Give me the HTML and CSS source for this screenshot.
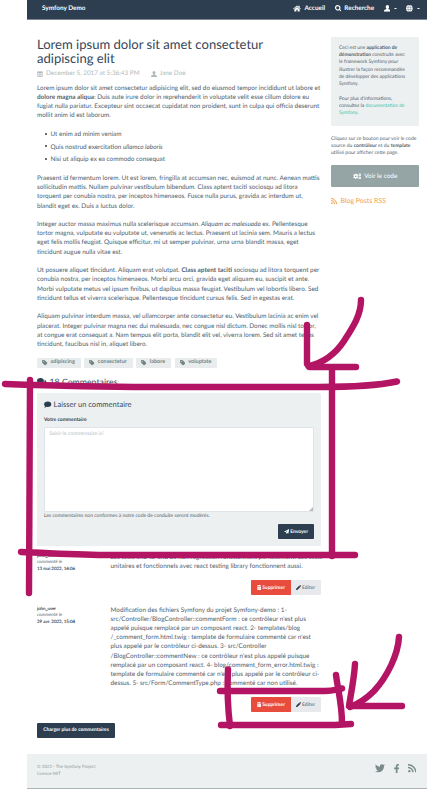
FILE: index.html
```html
<!DOCTYPE html>
<html lang="fr">
<head>
<meta charset="utf-8">
<title>Symfony Demo</title>
<link rel="stylesheet" href="styles.css">
</head>
<body>
<svg class="sprite" aria-hidden="true">
  <symbol id="home" viewBox="0 0 18 16"><path d="M9 1 0 8.500l1.200 1.300L9 3.400l7.800 6.400L18 8.500 15 6V1.500h-2.500v2.400zM9 4.800 3 9.700V15h4.500v-4h3v4H15V9.700z"/></symbol>
  <symbol id="search" viewBox="0 0 16 16"><path fill-rule="evenodd" d="M6.500 0a6.500 6.500 0 1 0 3.700 11.800L14.300 16 16 14.300l-4.200-4.100A6.500 6.500 0 0 0 6.500 0m0 2.700a3.800 3.800 0 1 1 0 7.600 3.800 3.800 0 0 1 0-7.600"/></symbol>
  <symbol id="user" viewBox="0 0 16 16"><path d="M8 0a4 4 0 0 1 4 4c0 2-1 4-2 4.700v1l4 1.300c1.500.5 2 1.500 2 5H0c0-3.500.5-4.500 2-5l4-1.300v-1C5 8 4 6 4 4a4 4 0 0 1 4-4"/></symbol>
  <symbol id="globe" viewBox="0 0 16 16"><circle cx="8" cy="8" r="8"/><path d="M0 5.500h16M0 10.500h16M8 0C3.500 4 3.500 12 8 16M8 0c4.500 4 4.500 12 0 16" fill="none" stroke="#2c3e50" stroke-width=".7"/></symbol>
  <symbol id="calendar" viewBox="0 0 16 16"><path fill-rule="evenodd" d="M1 2h2V0h3v2h4V0h3v2h2v14H1zm1.500 4v2h3V6zm4 0v2h3V6zm4 0v2h3V6zm-8 3v2h3V9zm4 0v2h3V9zm4 0v2h3V9zm-8 3v2h3v-2zm4 0v2h3v-2zm4 0v2h3v-2z"/></symbol>
  <symbol id="tag" viewBox="0 0 16 16"><path fill-rule="evenodd" d="M0 1.500Q0 0 1.500 0H7l8.500 8q1 1 0 2L10 15.500q-1 1-2 0L0 7.500zM3.500 2a1.500 1.500 0 1 0 0 3 1.500 1.500 0 0 0 0-3"/></symbol>
  <symbol id="comment" viewBox="0 0 18 16"><path d="M9 1c5 0 9 3 9 6.500S14 14 9 14q-2 0-3.500-.5Q3.500 15.500.5 15.500q2-2 2-3.500Q0 10 0 7.500C0 4 4 1 9 1"/></symbol>
  <symbol id="comments" viewBox="0 0 22 16"><path d="M8 0c4.500 0 8 2.500 8 6s-3.500 6-8 6q-1.500 0-3-.4Q3 13.500.5 13.500 2 12 2 10 0 8.500 0 6c0-3.500 3.500-6 8-6M17.500 4.500c3 .7 4.500 2.500 4.500 5q0 2-2 3.500 0 1.500 1.500 3-2.500 0-4.500-1.700-5 .7-8-1.300 8-.5 8.500-6.500z"/></symbol>
  <symbol id="plane" viewBox="0 0 16 16"><path d="M16 0 13.500 14 9 12.200 6.500 16v-5L13 3.500 4.500 10.300 0 8.500z"/></symbol>
  <symbol id="trash" viewBox="0 0 14 16"><path d="M0 1.500h4L5 0h4l1 1.500h4V4H0zM1 5h12v9.500Q13 16 11.500 16h-9Q1 16 1 14.500z"/><path d="M4.500 6.500v8M7 6.500v8M9.500 6.500v8" stroke="#e74c3c" stroke-width=".5"/></symbol>
  <symbol id="pencil" viewBox="0 0 16 16"><path d="m9.500 2.500 4 4L5 15l-5 1 1-5zM10.500 1.500l1-1q1-1 2 0l2 2q1 1 0 2l-1 1z"/></symbol>
  <symbol id="gear" viewBox="0 0 16 16"><path fill-rule="evenodd" d="M6.500 0h3l.5 2.200 1.500.8 2.200-.7 1.500 2.600L13.600 6.500v3l1.600 1.600-1.500 2.600-2.200-.7-1.500.8L9.500 16h-3L6 13.800 4.500 13l-2.200.7L.8 11.100l1.600-1.600v-3L.8 4.900l1.500-2.600 2.200.7L6 2.200zM8 5.500a2.500 2.500 0 1 0 0 5 2.500 2.500 0 0 0 0-5"/></symbol>
  <symbol id="gears" viewBox="0 0 22 16"><use href="#gear" x="0" y="1" width="14" height="14"/><use href="#gear" x="13" y="0" width="9" height="8"/><use href="#gear" x="13" y="8" width="9" height="8"/></symbol>
  <symbol id="rss" viewBox="0 0 16 16"><circle cx="2.500" cy="13.500" r="2.300"/><path d="M0 6.500A9.500 9.500 0 0 1 9.500 16M0 1.300A14.700 14.700 0 0 1 14.700 16" fill="none" stroke="currentColor" stroke-width="2.600"/></symbol>
  <symbol id="twitter" viewBox="0 0 512 420"><path d="M459 105c.3 4.500.3 9 .3 13.600 0 138.700-105.600 298.600-298.600 298.600-59.500 0-114.700-17.200-161.100-47 8.400 1 16.600 1.300 25.300 1.300 49 0 94.200-16.600 130.300-44.800-46.100-1-84.800-31.200-98.100-72.800 6.500 1 13 1.600 19.800 1.600 9.400 0 18.800-1.300 27.600-3.600-48-9.700-84.100-52-84.100-103v-1.300c14 7.800 30.200 12.700 47.400 13.300C39.500 142 20.900 110 20.900 74c0-19.500 5.200-37.400 14.300-53 51.700 63.700 129.300 105.300 216.400 109.800-1.600-7.800-2.600-15.900-2.600-24C249 49 295.800 2 353.900 2c30.200 0 57.500 12.700 76.700 33.100 23.700-4.500 46.500-13.300 66.600-25.300-7.800 24.400-24.400 44.800-46.100 57.800 21.100-2.300 41.600-8.100 60.400-16.200-14.300 20.800-32.200 39.300-52.600 54.300"/></symbol>
  <symbol id="facebook" viewBox="0 0 9 16"><path d="M9 0v2.700H7.200C6 2.700 5.800 3.300 5.800 4v2H9l-.4 2.900H5.800V16H2.900V8.900H0V6h2.900V3.700C2.900 1.300 4.400 0 6.600 0z"/></symbol>
</svg>

<header class="navbar">
  <a class="brand">Symfony Demo</a>
  <nav class="menu">
    <a class="item"><svg class="icon i-home"><use href="#home"/></svg>Accueil</a>
    <a class="item"><svg class="icon i-search"><use href="#search"/></svg>Recherche</a>
    <a class="item"><svg class="icon i-user"><use href="#user"/></svg><i class="caret"></i></a>
    <a class="item"><svg class="icon i-globe"><use href="#globe"/></svg><i class="caret"></i></a>
  </nav>
</header>

<div class="content">
  <main class="main">
    <h1 class="title">Lorem ipsum dolor sit amet consectetur<br>adipiscing elit</h1>
    <p class="meta"><svg class="icon i-meta"><use href="#calendar"/></svg><span class="date">December 5, 2017 at 5:36:43 PM</span><svg class="icon i-meta"><use href="#user"/></svg><span>Jane Doe</span></p>
    <div class="post">
      <p>Lorem ipsum dolor sit amet consectetur adipisicing elit, sed do eiusmod tempor incididunt ut labore et<br><strong>dolore magna aliqua</strong>: Duis aute irure dolor in reprehenderit in voluptate velit esse cillum dolore eu<br>fugiat nulla pariatur. Excepteur sint occaecat cupidatat non proident, sunt in culpa qui officia deserunt<br>mollit anim id est laborum.</p>
      <ul class="list">
        <li>Ut enim ad minim veniam</li>
        <li>Quis nostrud exercitation <em>ullamco laboris</em></li>
        <li>Nisi ut aliquip ex ea commodo consequat</li>
      </ul>
      <p>Praesent id fermentum lorem. Ut est lorem, fringilla at accumsan nec, euismod at nunc. Aenean mattis<br>sollicitudin mattis. Nullam pulvinar vestibulum bibendum. Class aptent taciti sociosqu ad litora<br>torquent per conubia nostra, per inceptos himenaeos. Fusce nulla purus, gravida ac interdum ut,<br>blandit eget ex. Duis a luctus dolor.</p>
      <p>Integer auctor massa maximus nulla scelerisque accumsan. <em>Aliquam ac malesuada</em> ex. Pellentesque<br>tortor magna, vulputate eu vulputate ut, venenatis ac lectus. Praesent ut lacinia sem. Mauris a lectus<br>eget felis mollis feugiat. Quisque efficitur, mi ut semper pulvinar, urna urna blandit massa, eget<br>tincidunt augue nulla vitae est.</p>
      <p>Ut posuere aliquet tincidunt. Aliquam erat volutpat. <strong>Class aptent taciti</strong> sociosqu ad litora torquent per<br>conubia nostra, per inceptos himenaeos. Morbi arcu orci, gravida eget aliquam eu, suscipit et ante.<br>Morbi vulputate metus vel ipsum finibus, ut dapibus massa feugiat. Vestibulum vel lobortis libero. Sed<br>tincidunt tellus et viverra scelerisque. Pellentesque tincidunt cursus felis. Sed in egestas erat.</p>
      <p>Aliquam pulvinar interdum massa, vel ullamcorper ante consectetur eu. Vestibulum lacinia ac enim vel<br>placerat. Integer pulvinar magna nec dui malesuada, nec congue nisl dictum. Donec mollis nisl tortor,<br>at congue erat consequat a. Nam tempus elit porta, blandit elit vel, viverra lorem. Sed sit amet tellus<br>tincidunt, faucibus nisl in, aliquet libero.</p>
    </div>
    <div class="tags">
      <a class="tag"><svg class="icon i-tag"><use href="#tag"/></svg>adipiscing</a>
      <a class="tag"><svg class="icon i-tag"><use href="#tag"/></svg>consectetur</a>
      <a class="tag"><svg class="icon i-tag"><use href="#tag"/></svg>labore</a>
      <a class="tag"><svg class="icon i-tag"><use href="#tag"/></svg>voluptate</a>
    </div>
    <h2 class="subtitle count"><svg class="icon i-comments"><use href="#comments"/></svg>18 Commentaires</h2>
    <form class="well">
      <h2 class="subtitle"><svg class="icon i-comment"><use href="#comment"/></svg>Laisser un commentaire</h2>
      <label class="label" for="c">Votre commentaire</label>
      <div class="field"><textarea class="area" id="c" placeholder="Saisir le commentaire ici"></textarea><svg class="grip" viewBox="0 0 5 5"><path d="M5 0v5H0z"/></svg></div>
      <p class="help">Les commentaires non conformes à notre code de conduite seront modérés.</p>
      <button class="btn send" type="button"><svg class="icon i-btn"><use href="#plane"/></svg>Envoyer</button>
    </form>
    <article class="comment first">
      <div class="author"><strong>john_user</strong><br>commenté le<br><strong>13 mai 2022, 14:06</strong></div>
      <div class="body">
        <p>Les tests end-to-end de non régression fonctionnent parfaitement. Les tests<br>unitaires et fonctionnels avec react testing library fonctionnent aussi.</p>
        <div class="actions"><button class="btn delete" type="button"><svg class="icon i-trash"><use href="#trash"/></svg>Supprimer</button><button class="btn edit" type="button"><svg class="icon i-btn"><use href="#pencil"/></svg>Editer</button></div>
      </div>
    </article>
    <article class="comment">
      <div class="author"><strong>john_user</strong><br>commenté le<br><strong>29 avr. 2022, 15:04</strong></div>
      <div class="body">
        <p>Modification des fichiers Symfony du projet Symfony-demo : 1-<br>src/Controller/BlogController::commentForm : ce contrôleur n'est plus<br>appelé puisque remplacé par un composant react. 2- templates/blog<br>/_comment_form.html.twig : template de formulaire commenté car n'est<br>plus appelé par le contrôleur ci-dessus. 3- src/Controller<br>/BlogController::commentNew : ce contrôleur n'est plus appelé puisque<br>remplacé par un composant react. 4- blog/comment_form_error.html.twig :<br>template de formulaire commenté car n'est plus appelé par le contrôleur ci-<br>dessus. 5- src/Form/CommentType.php : commenté car non utilisé.</p>
        <div class="actions"><button class="btn delete" type="button"><svg class="icon i-trash"><use href="#trash"/></svg>Supprimer</button><button class="btn edit" type="button"><svg class="icon i-btn"><use href="#pencil"/></svg>Editer</button></div>
      </div>
    </article>
    <button class="btn more" type="button">Charger plus de commentaires</button>
  </main>

  <aside class="side">
    <div class="about">
      <p>Ceci est une <strong>application de<br>démonstration</strong> construite avec<br>le framework Symfony pour<br>illustrer la façon recommandée<br>de développer des applications<br>Symfony.</p>
      <p>Pour plus d'informations,<br>consultez la <a class="link">documentation de<br>Symfony</a>.</p>
    </div>
    <p class="hint">Cliquez sur ce bouton pour voir le code<br>source du <strong>contrôleur</strong> et du <strong>template</strong><br>utilisé pour afficher cette page.</p>
    <button class="code" type="button"><svg class="icon i-gears"><use href="#gears"/></svg>Voir le code</button>
    <a class="feed"><svg class="icon i-rss"><use href="#rss"/></svg>Blog Posts RSS</a>
  </aside>
</div>

<footer class="footer">
  <p>© 2022 - The Symfony Project<br>Licence MIT</p>
  <div class="social"><svg class="icon i-tw"><use href="#twitter"/></svg><svg class="icon i-fb"><use href="#facebook"/></svg><svg class="icon i-feed"><use href="#rss"/></svg></div>
</footer>

<svg class="marks" viewBox="0 0 427 789" aria-hidden="true">
  <path d="M5 384C60 386 90 387 150 387H320C350 387 375 386 397 381.500"/>
  <path d="M30 380C30 430 29 500 29 593"/>
  <path d="M21 552C50 553 80 555 110 555H355"/>
  <path d="M332 368V556"/>
  <path d="M361 300C361 315 353 327 344 341C334 356 322 363 309 366"/>
  <path d="M307 325V364L309 367H356"/>
  <path d="M228 669.500C227 690 228 710 230 726"/>
  <path d="M220 691H325C333 691 338 689 342 688.500"/>
  <path d="M336 675C338 690 342 705 342 723"/>
  <path d="M221 725H335L351 724"/>
  <path d="M399 637C398 655 387 677 374 691C366 699 358 704 350 707"/>
  <path d="M355 664C354 680 351 693 349 706H402"/>
</svg>
</body>
</html>
```
FILE: styles.css
```css
* { box-sizing: border-box; }
body { margin: 0; width: 427px; height: 789px; overflow: hidden; position: relative; background: #fff; color: #505e6c; font-family: Lato, "Liberation Sans", sans-serif; font-size: 6.390px; line-height: 9.150px; white-space: nowrap; text-rendering: geometricPrecision; }
p, h1, h2, ul { margin: 0; padding: 0; font-weight: 400; }
button { font-family: inherit; border: 0; margin: 0; padding: 0; white-space: nowrap; text-rendering: inherit; }
.sprite { position: absolute; width: 0; height: 0; }
.icon { fill: currentColor; flex: none; display: block; }

.navbar { margin-left: 27px; height: 19.500px; padding: 0 7.500px 1px 15px; display: flex; align-items: center; justify-content: space-between; background: #2c3e50; border-bottom: 1px solid #7c8792; color: #fff; font-size: 6.400px; font-weight: 700; }
.menu { display: flex; gap: 9.400px; }
.item { display: flex; align-items: center; gap: 3px; }
.caret { width: 3px; margin-left: .5px; border: 1.500px solid transparent; border-top-color: #fff; border-bottom: 0; }
.i-home { width: 8px; height: 7px; }
.i-search, .i-user, .i-globe { width: 6.800px; height: 6.800px; }

.content { margin-left: 37px; height: 734.500px; display: flex; gap: 10px; }
.main { width: 284px; padding-top: 17px; }
.title { font-size: 13.050px; line-height: 14.400px; color: #34465a; }
.meta { display: flex; align-items: center; margin-top: 3.500px; height: 10px; color: #b0babc; font-size: 6.370px; }
.i-meta { width: 6px; height: 6px; margin-right: 3px; }
.date { margin-right: 11px; }
.post { margin-top: 5px; }
.post p + p { margin-top: 9.500px; }
.list { list-style: none; margin: 8.500px 0 7px; }
.list li { line-height: 12.700px; padding-left: 7.500px; }
.list li::before { content: ""; display: inline-block; width: 2px; height: 2px; border-radius: 50%; background: #2c3e50; margin-right: 4px; vertical-align: 1.300px; }
.tags { display: flex; gap: 3.500px; margin-top: 8.800px; }
.tag { display: flex; align-items: center; gap: 3px; height: 10px; padding: 0 6px 0 5px; border-radius: 1px; background: #e8eced; color: #748585; font-size: 5.500px; font-weight: 700; }
.i-tag { width: 5.500px; height: 5.500px; }
.subtitle { display: flex; align-items: center; gap: 2px; height: 12px; font-size: 7.550px; color: #3a4a5a; }
.count { margin-top: 7.500px; gap: 3px; font-size: 8.750px; }
.i-comments { width: 9.500px; height: 7px; }
.i-comment { width: 7.500px; height: 7px; }
.i-comments, .i-comment { color: #2c3e50; }

.well { display: flex; flex-direction: column; margin-top: 6px; height: 153px; padding: 5.500px 7px 0; border-radius: 1px; background: #ecf0f1; }
.label { margin-top: 5.500px; height: 10.500px; font-size: 5px; font-weight: 700; color: #2c3e50; }
.field { height: 85px; position: relative; }
.area { display: block; width: 100%; height: 85px; resize: none; border: 1px solid #dfe4e8; border-radius: 1px; padding: 3px 4.500px; font: 5.150px/7px Lato, sans-serif; background: #fff; text-rendering: inherit; }
.area::placeholder { color: #b5bec3; opacity: 1; }
.grip { position: absolute; right: 1px; bottom: 1px; width: 4px; height: 4px; fill: #b8bbbd; }
.help { height: 12.500px; font-size: 5px; line-height: 8px; }
.btn { display: flex; align-items: center; justify-content: center; gap: 1px; height: 15px; border-radius: 1px; background: #2c3e50; color: #fff; font-size: 4.950px; font-weight: 700; }
.i-btn { width: 5.200px; height: 5.200px; }
.send { width: 36px; align-self: flex-end; }

.comment { display: flex; height: 117px; }
.comment.first { margin-top: 6.500px; height: 53px; }
.author { width: 73.500px; font-size: 4.450px; line-height: 6.400px; }
.author strong { font-weight: 400; color: #2c3e50; -webkit-text-stroke: .1px; }
.body { width: 210px; }
.actions { display: flex; justify-content: flex-end; margin-top: 9.200px; }
.delete { width: 39.500px; border-radius: 1px 0 0 1px; background: #e74c3c; }
.edit { width: 30px; border-radius: 0 1px 1px 0; background: #e8e9ed; color: #75818c; }
.edit .icon { color: #2c3e50; }
.i-trash { width: 4.700px; height: 5.300px; }
.more { width: 78px; font-size: 4.900px; }

.side { width: 88px; padding-top: 17.500px; font-size: 4.900px; line-height: 7.200px; }
.about { height: 88.500px; padding: 8px; border-radius: 1px; background: #ecf0f1; }
.about p + p { margin-top: 7.400px; }
.link { color: #3fc3a5; }
.hint { margin-top: 10px; font-size: 5px; }
.code { display: flex; align-items: center; justify-content: center; gap: 3px; width: 88px; height: 22px; margin-top: 8px; border-radius: 1px; background: #95a5a6; color: #fff; font-size: 6.450px; }
.i-gears { width: 8.500px; height: 6.500px; }
.feed { display: flex; align-items: center; gap: 3.500px; margin-top: 10.500px; font-size: 6.950px; color: #f39c4a; }
.i-rss { width: 6px; height: 6px; }

.footer { margin-left: 27px; height: 35px; display: flex; justify-content: space-between; padding: 9px 11px 0 10px; background: #ecf0f1; border-bottom: 1px solid #aeb5b7; color: #8b9a9b; font-size: 4.400px; line-height: 7.300px; }
.social { display: flex; align-items: center; gap: 8.300px; height: 11px; color: #7b8a8b; }
.i-tw { width: 10px; height: 8.500px; }
.i-fb { width: 5.500px; height: 9.500px; }
.i-feed { width: 8.500px; height: 8.500px; }

.marks { position: absolute; left: 0; top: 0; width: 427px; height: 789px; fill: none; stroke: #b31564; stroke-width: 6.400px; stroke-linecap: round; stroke-linejoin: round; pointer-events: none; }
```
